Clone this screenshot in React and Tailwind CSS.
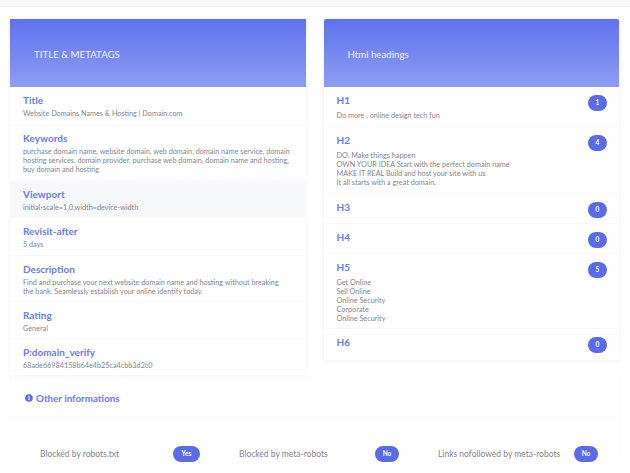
const META = [
  { label: "Title", lines: ["Website Domains Names & Hosting | Domain.com"], h: "h-[38px]" },
  {
    label: "Keywords",
    lines: [
      "purchase domain name, website domain, web domain, domain name service, domain",
      "hosting services, domain provider, purchase web domain, domain name and hosting,",
      "buy domain and hosting",
    ],
    h: "h-[56px]",
  },
  { label: "Viewport", lines: ["initial-scale=1.0,width=device-width"], h: "h-[37px]", shade: true },
  { label: "Revisit-after", lines: ["5 days"], h: "h-[38px]" },
  {
    label: "Description",
    lines: [
      "Find and purchase your next website domain name and hosting without breaking",
      "the bank. Seamlessly establish your online identify today.",
    ],
    h: "h-[46px]",
  },
  { label: "Rating", lines: ["General"], h: "h-[37px]" },
  { label: "P:domain_verify", lines: ["68ade66984158b64e4b25ca4cbb3d2c0"], h: "h-[37px]" },
];

const HEADINGS = [
  { label: "H1", count: 1, lines: ["Do more , online design tech fun"], h: "h-[40px]" },
  {
    label: "H2",
    count: 4,
    lines: [
      "DO. Make things happen",
      "OWN YOUR IDEA Start with the perfect domain name",
      "MAKE IT REAL Build and host your site with us",
      "It all starts with a great domain.",
    ],
    h: "h-[67px]",
  },
  { label: "H3", count: 0, lines: [], h: "h-[30px]" },
  { label: "H4", count: 0, lines: [], h: "h-[30px]" },
  {
    label: "H5",
    count: 5,
    lines: ["Get Online", "Sell Online", "Online Security", "Corporate", "Online Security"],
    h: "h-[75px]",
  },
  { label: "H6", count: 0, lines: [], h: "h-[32px]" },
];

const ROBOTS = [
  { label: "Blocked by robots.txt", val: "Yes", labelW: "w-[133px]", pill: "w-[27px]", mr: "mr-[39px]" },
  { label: "Blocked by meta-robots", val: "No", labelW: "w-[136px]", pill: "w-[24px]", mr: "mr-[39px]" },
  { label: "Links nofollowed by meta-robots", val: "No", labelW: "w-[136px]", pill: "w-[24px]", mr: "" },
];

function CardHeader({ children }) {
  return (
    <div className="h-[68px] pl-[24px] pt-[3px] flex items-center bg-gradient-to-b from-[#5f72ee] to-[#8e9cf2] text-[#eef0fd] text-[9.7px]">
      {children}
    </div>
  );
}

function Pill({ className = "", children }) {
  return (
    <span className={`h-[16px] rounded-full bg-[#5a6bea] text-white text-[6.5px] font-bold flex items-center justify-center ${className}`}>
      {children}
    </span>
  );
}

export default function App() {
  return (
    <div className="w-[630px] h-[473px] overflow-hidden bg-white text-[#82858d] font-['Lato','Noto_Sans',sans-serif]">
      <div className="h-[7px] bg-[#f7f9fa] border-b border-[#f0f3f4]" />

      <div className="flex items-start gap-[18px] pl-[10px] pt-[12px]">
        <div className="w-[295.5px] shadow-[0_0_4px_rgba(90,100,140,0.08)]">
          <CardHeader>TITLE &amp; METATAGS</CardHeader>
          {META.map((row) => (
            <div
              key={row.label}
              className={`${row.h} pl-[13px] pt-[7px] border-b border-[#f9fafb] ${row.shade ? "bg-[#f7f8fa]" : "bg-white"}`}
            >
              <p className="text-[10px] leading-[13px] font-bold text-[#6a7bf0]">{row.label}</p>
              <div className="mt-[2px] text-[7.25px] leading-[9px]">
                {row.lines.map((l) => <p key={l} className="whitespace-nowrap">{l}</p>)}
              </div>
            </div>
          ))}
        </div>

        <div className="w-[295.5px] rounded-t-[2px] overflow-hidden shadow-[0_0_4px_rgba(90,100,140,0.1)]">
          <CardHeader>Html headings</CardHeader>
          {HEADINGS.map((row) => (
            <div
              key={row.label}
              className={`${row.h} pl-[13px] pr-[12px] pt-[7px] flex justify-between border-b border-[#f9fafb] bg-white`}
            >
              <div>
                <p className="text-[10px] leading-[13px] font-bold text-[#6a7bf0]">{row.label}</p>
                {row.lines.length > 0 && (
                  <div className="mt-[4px] text-[7.25px] leading-[9px]">
                    {row.lines.map((l, i) => <p key={i} className="whitespace-nowrap">{l}</p>)}
                  </div>
                )}
              </div>
              <Pill className="w-[19px] mt-[1px]">{row.count}</Pill>
            </div>
          ))}
        </div>
      </div>

      <div className="ml-[10px] mt-[-1px] w-[610px] border-x border-[#fbfbfc]">
        <div className="h-[43px] pt-[4px] pl-[14px] flex items-center gap-[3px] border-b border-[#fafbfb]">
          <svg width="8" height="8" viewBox="0 0 8 8">
            <circle cx="4" cy="4" r="3.8" fill="#5a6bea" />
            <rect x="3.4" y="3.3" width="1.2" height="2.9" fill="#fff" />
            <rect x="3.4" y="1.8" width="1.2" height="1" fill="#fff" />
          </svg>
          <span className="text-[9.8px] font-bold text-[#6a7bf0]">Other informations</span>
        </div>
        <div className="flex items-center pl-[29px] pt-[28px]">
          {ROBOTS.map((r) => (
            <div key={r.label} className={`flex items-center ${r.mr}`}>
              <span className={`text-[8.5px] whitespace-nowrap ${r.labelW}`}>{r.label}</span>
              <Pill className={r.pill}>{r.val}</Pill>
            </div>
          ))}
        </div>
      </div>
    </div>
  );
}
